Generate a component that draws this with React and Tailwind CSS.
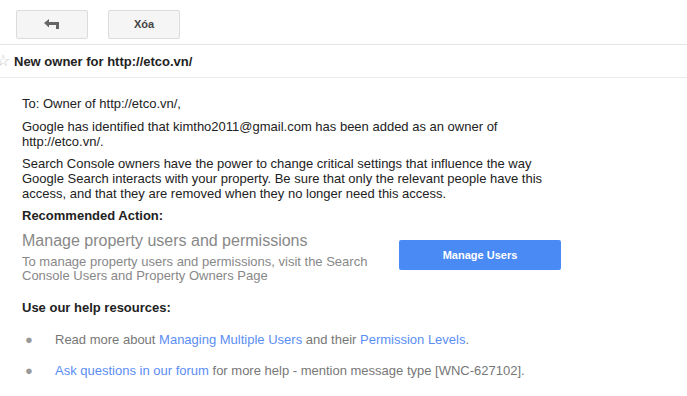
import React from "react";

function Bullet({ children }) {
  return (
    <li className="flex items-start h-[31px]">
      <span className="w-[33px] pl-[3px] text-[#999] text-[13px] leading-[15px]">●</span>
      <span className="text-[#777]">{children}</span>
    </li>
  );
}

export default function App() {
  return (
    <div className="w-[687px] h-[396px] bg-white overflow-hidden text-[13px] leading-[15px] text-[#222] font-['Liberation_Sans',Arial,sans-serif]">
      <div className="flex gap-[20px] pl-[16px] pt-[10px] h-[45px] border-b border-[#e5e5e5]">
        <button className="w-[72px] h-[29px] bg-[#f5f5f5] border border-[#dcdcdc] rounded-[2px] flex items-center justify-center">
          <svg width="16" height="11" viewBox="0 0 16 11">
            <path d="M0 4 L5 0 L5 3 L15 3 L15 10 L12 10 L12 6 L5 6 L5 8.5 Z" fill="#666" />
          </svg>
        </button>
        <button className="w-[72px] h-[29px] bg-[#f5f5f5] border border-[#dcdcdc] rounded-[2px] text-[11px] font-bold text-[#444]">
          Xóa
        </button>
      </div>

      <div className="flex items-center h-[33px] border-b border-[#ebebeb] -ml-[4px]">
        <span className="text-[#c8c8c8] text-[16px] w-[18px] leading-none">☆</span>
        <h1 className="font-bold text-[13px] text-[#222]">New owner for http://etco.vn/</h1>
      </div>

      <div className="pl-[22px] pt-[18px] pr-[60px]">
        <p>To: Owner of http://etco.vn/,</p>
        <p className="mt-[8px] w-[520px]">
          Google has identified that kimtho2011@gmail.com has been added as an owner of http://etco.vn/.
        </p>
        <p className="mt-[7px] w-[540px]">
          Search Console owners have the power to change critical settings that influence the way Google Search interacts with your property. Be sure that only the relevant people have this access, and that they are removed when they no longer need this access.
        </p>
        <p className="font-bold mt-[7px]">Recommended Action:</p>

        <div className="flex items-start mt-[8px]">
          <div className="w-[377px] text-[#888]">
            <div className="text-[16px] leading-[19px]">Manage property users and permissions</div>
            <div className="mt-[5px] leading-[14px] w-[360px]">
              To manage property users and permissions, visit the Search Console Users and Property Owners Page
            </div>
          </div>
          <button className="mt-[9px] w-[162px] h-[30px] bg-[#4a8af4] rounded-[2px] text-white text-[11px] font-bold">
            Manage Users
          </button>
        </div>

        <p className="font-bold mt-[17px]">Use our help resources:</p>

        <ul className="mt-[17px]">
          <Bullet>
            Read more about <a className="text-[#5b8ef4]">Managing Multiple Users</a> and their{" "}
            <a className="text-[#5b8ef4]">Permission Levels</a>.
          </Bullet>
          <Bullet>
            <a className="text-[#5b8ef4]">Ask questions in our forum</a> for more help - mention message type [WNC-627102].
          </Bullet>
        </ul>
      </div>
    </div>
  );
}
